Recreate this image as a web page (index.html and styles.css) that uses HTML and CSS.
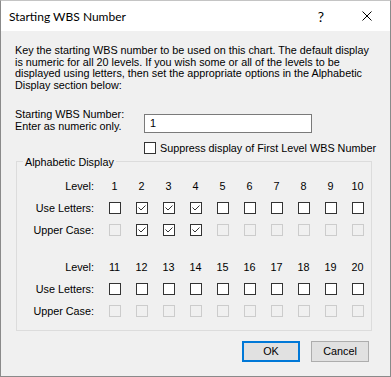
FILE: index.html
```html
<!doctype html>
<html lang="en">
  <head>
    <meta charset="UTF-8" />
    <title>Starting WBS Number</title>
    <link rel="stylesheet" href="styles.css">
  </head>
  <body>
    <div class="window">
      <div class="titlebar">
        <span class="title">Starting WBS Number</span>
        <span class="cap-btn help">?</span>
        <span class="cap-btn close">
          <svg width="10" height="10" viewBox="0 0 10 10">
            <path d="M0.5 0.5 L9.5 9.5 M9.5 0.5 L0.5 9.5" stroke="#000" stroke-width="1" fill="none" />
          </svg>
        </span>
      </div>
      <div class="dialog-body">
        <p class="intro">
          Key the starting WBS number to be used on this chart. The default display<br>
          is numeric for all 20 levels. If you wish some or all of the levels to be<br>
          displayed using letters, then set the appropriate options in the Alphabetic<br>
          Display section below:
        </p>
        <div class="start-row">
          <label class="start-label" for="start-input">Starting WBS Number:<br>Enter as numeric only.</label>
          <input type="text" id="start-input" class="start-input" value="1" />
        </div>
        <div class="suppress-row">
          <span class="cb"></span>
          <span>Suppress display of First Level WBS Number</span>
        </div>
        <fieldset class="alpha-group">
          <legend>Alphabetic Display</legend>
          <div id="grids"></div>
        </fieldset>
        <div class="button-row">
          <button class="btn btn-default">OK</button>
          <button class="btn">Cancel</button>
        </div>
      </div>
    </div>
    <script>
      const grids = document.getElementById("grids");
      const TICK =
        '<svg width="10" height="10" viewBox="0 0 10 10"><path d="M1.5 4.5 L4 7 L8.5 2.5" stroke="#333" stroke-width="1" fill="none"/></svg>';

      const blocks = [
        { from: 1, letters: [2, 3, 4] },
        { from: 11, letters: [] },
      ];

      function addCell(grid, cls, html) {
        const el = document.createElement("span");
        el.className = cls;
        el.innerHTML = html || "";
        grid.appendChild(el);
      }

      blocks.forEach((block) => {
        const grid = document.createElement("div");
        grid.classList.add("level-grid");
        const nums = [];
        for (let i = 0; i < 10; i++) nums.push(block.from + i);

        addCell(grid, "row-label", "Level:");
        nums.forEach((n) => addCell(grid, "level-num", n));

        addCell(grid, "row-label", "Use Letters:");
        nums.forEach((n) => {
          const on = block.letters.includes(n);
          addCell(grid, on ? "cb checked" : "cb", on ? TICK : "");
        });

        addCell(grid, "row-label", "Upper Case:");
        nums.forEach((n) => {
          const on = block.letters.includes(n);
          addCell(grid, on ? "cb checked" : "cb disabled", on ? TICK : "");
        });

        grids.appendChild(grid);
      });
    </script>
  </body>
</html>
```

FILE: styles.css
```css
body {
  margin: 0;
  background-color: #f0f0f0;
}

.window {
  width: 391px;
  height: 377px;
  box-sizing: border-box;
  border: 1px solid #8a8a8a;
  border-top-color: #c4c4c4;
  background-color: #f0f0f0;
  font-family: "Liberation Sans", Arial, sans-serif;
  font-size: 10.8px;
  color: #000;
}

.titlebar {
  display: flex;
  align-items: center;
  height: 30px;
  background-color: #fff;
}

.title {
  flex: 1;
  padding-left: 8px;
  font-family: Lato, "Noto Sans", sans-serif;
  font-size: 12px;
}

.cap-btn {
  width: 46px;
  height: 30px;
  display: flex;
  align-items: center;
  justify-content: center;
}

.help {
  font-family: Lato, "Noto Sans", sans-serif;
  font-size: 14px;
}

.dialog-body {
  padding: 14px 20px 0 14px;
}

.intro {
  margin: 0;
  line-height: 11.7px;
  white-space: nowrap;
}

.start-row {
  display: flex;
  margin-top: 16px;
}

.start-label {
  width: 129px;
  line-height: 12.3px;
}

.start-input {
  margin-top: 6px;
  width: 168px;
  height: 19px;
  box-sizing: border-box;
  border: 1px solid #7a7a7a;
  padding: 0 0 0 5px;
  font-family: inherit;
  font-size: 10.8px;
  outline: none;
}

.suppress-row {
  display: flex;
  align-items: center;
  gap: 4px;
  margin: 9px 0 0 129px;
  height: 12px;
  white-space: nowrap;
}

.cb {
  width: 12px;
  height: 12px;
  box-sizing: border-box;
  border: 1px solid #333;
  background-color: #fff;
  display: block;
  flex-shrink: 0;
}

.cb svg {
  display: block;
}

.cb.disabled {
  border-color: #cccccc;
  background-color: #f0f0f0;
}

.alpha-group {
  margin: 1px 0 0 1px;
  padding: 6px 0 8px 0;
  width: 356px;
  box-sizing: border-box;
  border: 1px solid #dcdcdc;
  min-width: 0;
}

.alpha-group legend {
  margin-left: 6px;
  padding: 0 2px;
  line-height: 14px;
}

.level-grid {
  display: grid;
  grid-template-columns: 84px repeat(10, 27px);
  grid-auto-rows: 22px;
  align-items: center;
}

.level-grid + .level-grid {
  margin-top: 15px;
}

.row-label {
  text-align: right;
  padding-right: 7px;
}

.level-num {
  text-align: center;
}

.level-grid .cb {
  margin-left: 8px;
}

.button-row {
  display: flex;
  justify-content: flex-end;
  gap: 11px;
  margin: 10px 1px 0 0;
}

.btn {
  width: 58px;
  height: 21px;
  box-sizing: border-box;
  border: 1px solid #adadad;
  background-color: #e1e1e1;
  font-family: inherit;
  font-size: 10.8px;
  color: #000;
  padding: 0;
}

.btn-default {
  border: 2px solid #0078d7;
}
```
